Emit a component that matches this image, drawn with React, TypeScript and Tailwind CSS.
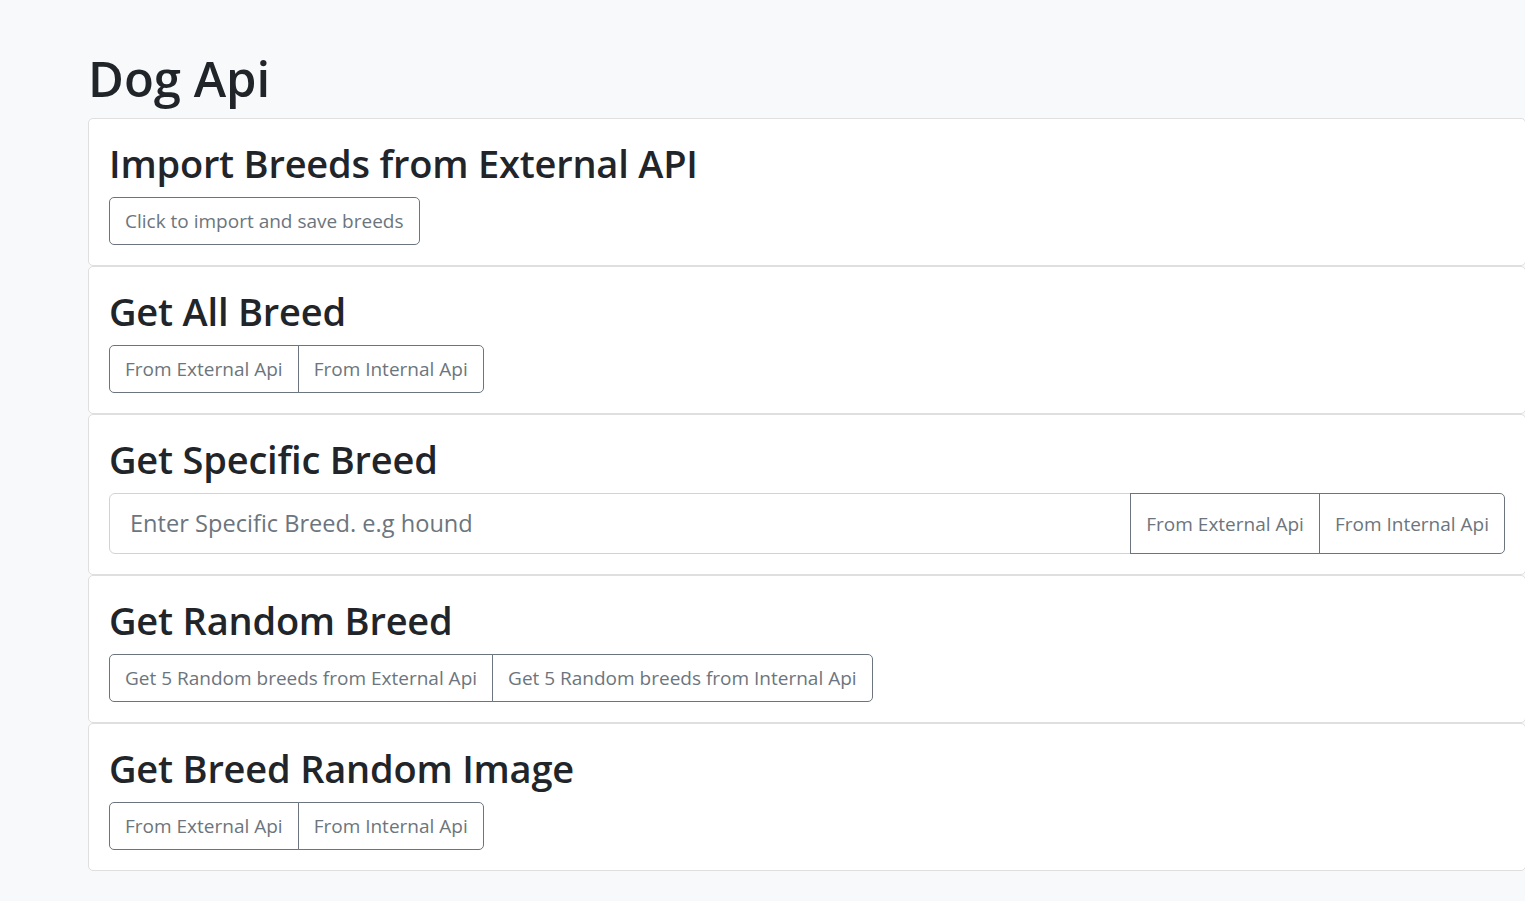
import React from 'react';

const font = { fontFamily: '"Open Sans", "Noto Sans", sans-serif' };

const btn = 'border border-[#6c757d] bg-transparent px-[15px] py-[8px] text-[19px] leading-[30px] text-[#6c757d]';

function BtnGroup({ labels }: { labels: string[] }) {
    return (
        <div className="flex">
            {labels.map((label, i) => (
                <button
                    key={label}
                    className={
                        btn + ' ' +
                        (i === 0 ? 'rounded-l-[5px] ' : '-ml-px ') +
                        (i === labels.length - 1 ? 'rounded-r-[5px]' : '')
                    }
                >
                    {label}
                </button>
            ))}
        </div>
    );
}

function Card({ title, children }: { title: string; children: React.ReactNode }) {
    return (
        <div className="w-[1438px] rounded-[5px] border border-[#dfdfdf] bg-white p-[20px]">
            <h2 className="mb-[10px] text-[38px] font-semibold leading-[48px] tracking-[-0.2px] text-[#212529]">{title}</h2>
            {children}
        </div>
    );
}

export default function App() {
    return (
        <div className="h-[901px] w-[1525px] overflow-hidden bg-[#f8f9fa] pl-[88px] pt-[48px]" style={font}>
            <h1 className="mb-[10px] text-[49px] font-semibold leading-[60px] text-[#212529]">Dog Api</h1>

            <Card title="Import Breeds from External API">
                <div className="flex">
                    <button className={btn + ' rounded-[5px]'}>Click to import and save breeds</button>
                </div>
            </Card>

            <Card title="Get All Breed">
                <BtnGroup labels={['From External Api', 'From Internal Api']} />
            </Card>

            <Card title="Get Specific Breed">
                <div className="flex">
                    <input
                        placeholder="Enter Specific Breed. e.g hound"
                        className="min-w-0 flex-1 rounded-l-[6px] border border-[#ced4da] px-[20px] py-[11px] text-[23.6px] leading-[37px] text-[#495057] outline-none placeholder:text-[#6c757d]"
                    />
                    <button className={btn + ' -ml-px py-0'}>From External Api</button>
                    <button className={btn + ' -ml-px rounded-r-[5px] py-0'}>From Internal Api</button>
                </div>
            </Card>

            <Card title="Get Random Breed">
                <BtnGroup labels={['Get 5 Random breeds from External Api', 'Get 5 Random breeds from Internal Api']} />
            </Card>

            <Card title="Get Breed Random Image">
                <BtnGroup labels={['From External Api', 'From Internal Api']} />
            </Card>
        </div>
    );
}
